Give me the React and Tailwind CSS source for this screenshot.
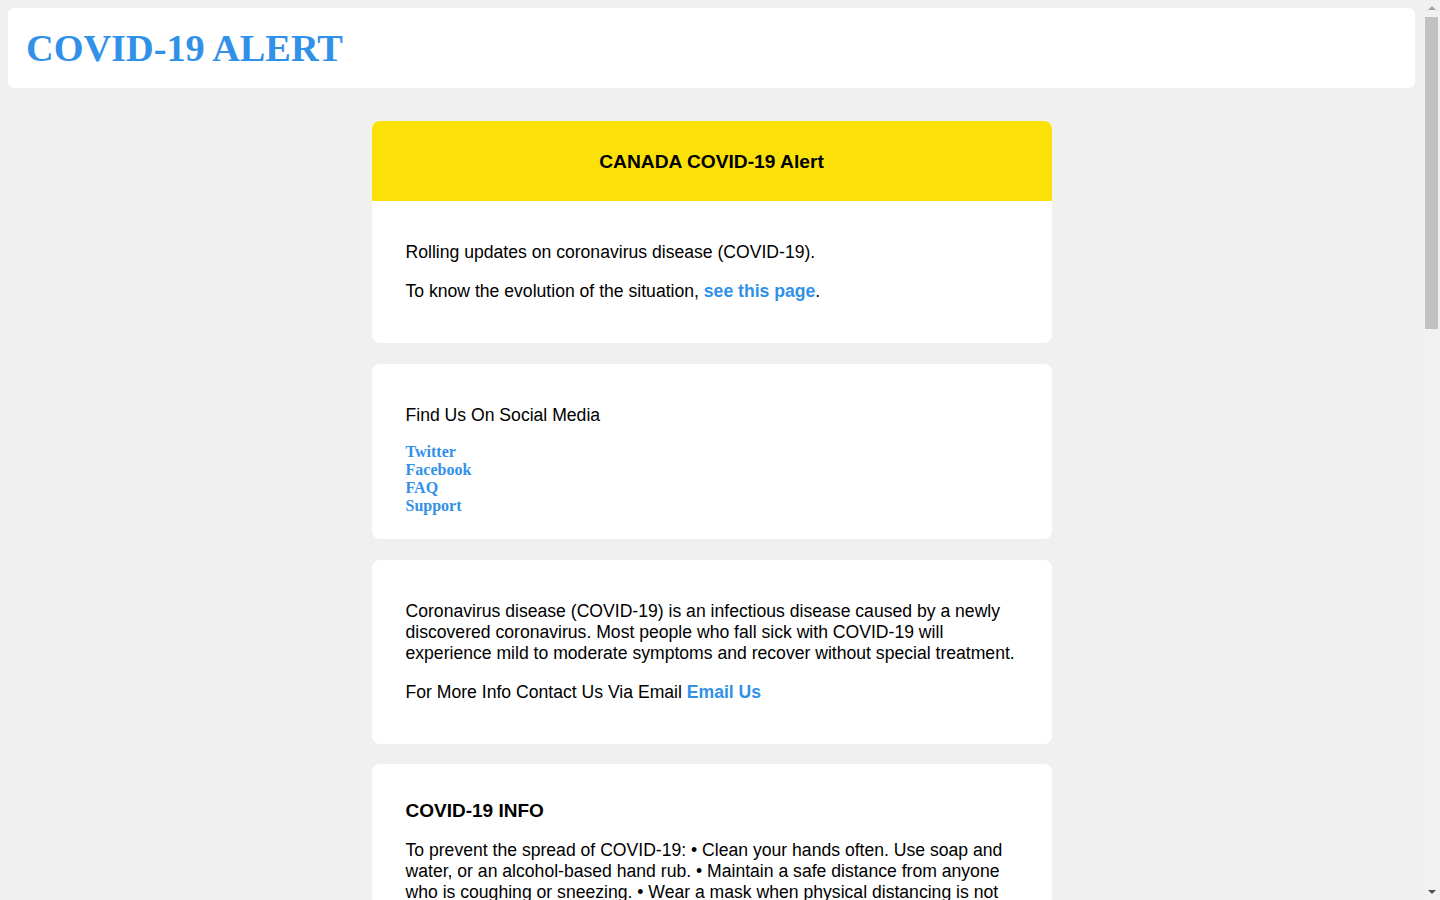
export default function App() {
  const body = { fontFamily: '"Liberation Sans", Arial, sans-serif' };
  const serif = { fontFamily: '"Liberation Serif", "Times New Roman", serif' };
  const extra = [
    "Symptoms may appear 1-14 days after exposure to the virus. The most common symptoms are fever, dry cough and tiredness. Other symptoms that are less common and may affect some patients include aches and pains, nasal congestion, headache, conjunctivitis, sore throat, diarrhea, loss of taste or smell or a rash on skin or discoloration of fingers or toes.",
    "If you have symptoms, stay home and isolate yourself from others. Contact your local public health authority for advice on testing and care. Seek immediate medical attention if you have difficulty breathing or shortness of breath, chest pain or pressure, or loss of speech or movement.",
  ];
  return (
    <div className="flex h-screen overflow-hidden bg-[#f0f0f0]" style={body}>
      <div className="min-w-0 flex-1 overflow-hidden p-2">
        <header className="flex h-20 items-center rounded-md bg-white pl-[18px]">
          <h1 className="text-[38.3px] font-bold leading-none text-[#3191e8]" style={serif}>
            COVID-19 ALERT
          </h1>
        </header>

        <main className="mx-auto mt-[33px] flex w-[680px] flex-col gap-[21px] text-[17.6px] leading-[21px] text-black">
          <section className="overflow-hidden rounded-lg bg-white">
            <div className="flex h-20 items-center justify-center bg-[#fce108]">
              <h2 className="text-[19.2px] font-bold">CANADA COVID-19 Alert</h2>
            </div>
            <div className="pb-[24px] pl-[34px] pr-[32px] pt-[41px]">
              <p>Rolling updates on coronavirus disease (COVID-19).</p>
              <p className="mt-[18px]">
                To know the evolution of the situation,{" "}
                <a href="#" className="font-bold text-[#3191e8]">see this page</a>.
              </p>
              <div className="h-[17px]" />
            </div>
          </section>

          <section className="rounded-lg bg-white pb-[24px] pl-[34px] pr-[32px] pt-[41px]">
            <p>Find Us On Social Media</p>
            <div className="mt-[17px] flex flex-col text-[16px] font-bold leading-[18px] text-[#3191e8]" style={serif}>
              <a href="#">Twitter</a>
              <a href="#">Facebook</a>
              <a href="#">FAQ</a>
              <a href="#">Support</a>
            </div>
          </section>

          <section className="rounded-lg bg-white pb-[24px] pl-[34px] pr-[32px] pt-[41px]">
            <p>
              Coronavirus disease (COVID-19) is an infectious disease caused by a newly discovered coronavirus. Most people who fall sick with COVID-19 will experience mild to moderate symptoms and recover without special treatment.
            </p>
            <p className="mt-[18px]">
              For More Info Contact Us Via Email{" "}
              <a href="#" className="font-bold text-[#3191e8]">Email Us</a>
            </p>
            <div className="h-[17px]" />
          </section>

          <section className="-mt-px rounded-lg bg-white pb-[24px] pl-[34px] pr-[32px] pt-[36px]">
            <h3 className="text-[19px] font-bold">COVID-19 INFO</h3>
            <p className="mt-[19px]">
              To prevent the spread of COVID-19: • Clean your hands often. Use soap and water, or an alcohol-based hand rub. • Maintain a safe distance from anyone who is coughing or sneezing. • Wear a mask when physical distancing is not possible. • Don't touch your eyes, nose or mouth. • Cover your nose and mouth with your bent elbow or a tissue when you cough or sneeze. • Stay home if you feel unwell. • If you have a fever, cough and difficulty breathing, seek medical attention.
            </p>
            <div className="h-[18px]" />
          </section>

          {extra.map((t, i) => (
            <section key={i} className="rounded-lg bg-white pb-[24px] pl-[34px] pr-[32px] pt-[40px]">
              <p>{t}</p>
              <div className="h-[18px]" />
            </section>
          ))}
        </main>
      </div>

      <aside className="flex w-[17px] shrink-0 flex-col bg-[#f1f1f1]">
        <div className="flex h-[17px] shrink-0 items-center justify-center">
          <svg width="8" height="5" viewBox="0 0 8 5" className="mt-[-1px]">
            <polygon points="4,0 8,4 0,4" fill="#a3a3a3" />
          </svg>
        </div>
        <div className="flex-1 px-[2px]">
          <div className="h-[312px] bg-[#c1c1c1]" />
        </div>
        <div className="flex h-[17px] shrink-0 items-center justify-center">
          <svg width="8" height="5" viewBox="0 0 8 5" className="mt-[1px]">
            <polygon points="0,0 8,0 4,4" fill="#505050" />
          </svg>
        </div>
      </aside>
    </div>
  );
}
